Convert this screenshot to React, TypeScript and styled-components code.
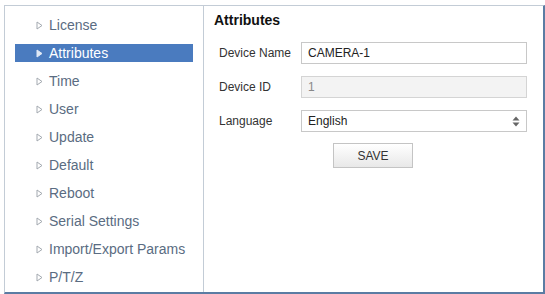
import React from 'react'
import styled, { createGlobalStyle } from 'styled-components'

const GlobalStyle = createGlobalStyle`
  html, body {
    margin: 0;
    padding: 0;
    background: #fff;
    font-family: "Liberation Sans", Arial, sans-serif;
  }
`

const Frame = styled.div`
  box-sizing: border-box;
  margin: 5px 0 0 4px;
  width: 541px;
  height: 289px;
  display: flex;
  background: #fff;
  border-top: 1px solid #c3ccd6;
  border-left: 1px solid #c3ccd6;
  border-right: 2px solid #5b7ca3;
  border-bottom: 2px solid #5b7ca3;
`

const Sidebar = styled.ul`
  list-style: none;
  margin: 0;
  padding: 5px 0 0;
  width: 198px;
  flex: none;
  border-right: 1px solid #c3ccd6;
`

const MenuItem = styled.li`
  height: 28px;
  display: flex;
  align-items: center;
`

const MenuLabel = styled.div<{ $active?: boolean }>`
  display: flex;
  align-items: center;
  gap: 6px;
  margin: 0 10px;
  padding-left: 21px;
  width: 100%;
  height: 18px;
  font-size: 14px;
  color: ${p => (p.$active ? '#fff' : '#5a6c82')};
  background: ${p => (p.$active ? '#4a7bbf' : 'transparent')};
`

const Content = styled.section`
  flex: 1;
  padding: 6px 10px 0;
`

const Title = styled.h2`
  margin: 0;
  font-size: 14px;
  line-height: 16px;
  font-weight: bold;
  color: #111;
`

const Form = styled.div`
  display: flex;
  flex-direction: column;
  gap: 12px;
  margin-top: 14px;
  padding-left: 5px;
`

const Row = styled.div`
  display: flex;
  align-items: center;
  height: 22px;
`

const Label = styled.label`
  width: 82px;
  font-size: 12px;
  color: #333;
`

const Field = styled.div<{ $disabled?: boolean }>`
  box-sizing: border-box;
  position: relative;
  width: 226px;
  height: 22px;
  display: flex;
  align-items: center;
  padding-left: 6px;
  font-size: 12px;
  border: 1px solid ${p => (p.$disabled ? '#d4d4d4' : '#c8c8c8')};
  background: ${p => (p.$disabled ? '#f3f3f3' : '#fff')};
  color: ${p => (p.$disabled ? '#888' : '#222')};
`

const SelectArrow = styled.svg`
  position: absolute;
  right: 6px;
  top: 5px;
`

const Actions = styled.div`
  display: flex;
  justify-content: center;
  margin-top: 11px;
  padding-right: 1px;
`

const SaveButton = styled.button`
  box-sizing: border-box;
  width: 80px;
  height: 25px;
  font-family: inherit;
  font-size: 12px;
  color: #333;
  border: 1px solid #c4c4c4;
  background: linear-gradient(#ffffff, #e8e8e8);
`

const Arrow = ({ active }: { active?: boolean }) => (
  <svg width="7" height="9" viewBox="0 0 7 9">
    <polygon
      points="1,1 6,4.5 1,8"
      fill={active ? '#dfe8f5' : 'none'}
      stroke={active ? '#dfe8f5' : '#a3a9b0'}
      strokeWidth="1"
    />
  </svg>
)

const menu = [
  'License',
  'Attributes',
  'Time',
  'User',
  'Update',
  'Default',
  'Reboot',
  'Serial Settings',
  'Import/Export Params',
  'P/T/Z',
]

export default function App() {
  return (
    <>
      <GlobalStyle />
      <Frame>
        <Sidebar>
          {menu.map(name => {
            const active = name === 'Attributes'
            return (
              <MenuItem key={name}>
                <MenuLabel $active={active}>
                  <Arrow active={active} />
                  {name}
                </MenuLabel>
              </MenuItem>
            )
          })}
        </Sidebar>
        <Content>
          <Title>Attributes</Title>
          <Form>
            <Row>
              <Label>Device Name</Label>
              <Field>CAMERA-1</Field>
            </Row>
            <Row>
              <Label>Device ID</Label>
              <Field $disabled>1</Field>
            </Row>
            <Row>
              <Label>Language</Label>
              <Field>
                English
                <SelectArrow width="8" height="11" viewBox="0 0 8 11">
                  <polygon points="4,0.5 7.5,4.5 0.5,4.5" fill="#666" />
                  <polygon points="0.5,6.5 7.5,6.5 4,10.5" fill="#666" />
                </SelectArrow>
              </Field>
            </Row>
          </Form>
          <Actions>
            <SaveButton>SAVE</SaveButton>
          </Actions>
        </Content>
      </Frame>
    </>
  )
}
